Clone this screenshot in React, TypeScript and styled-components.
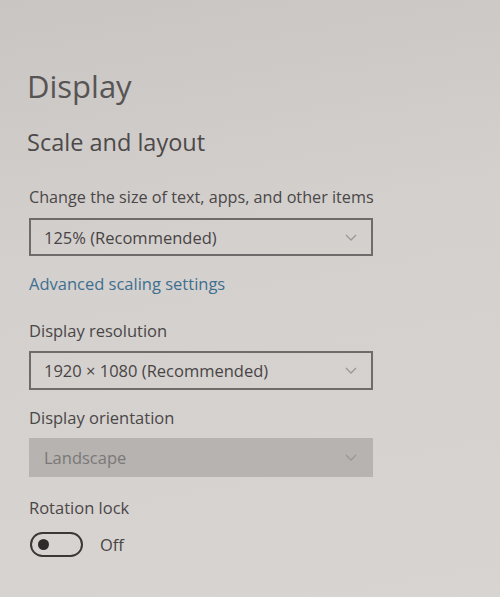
import styled, { createGlobalStyle } from "styled-components";

const GlobalStyle = createGlobalStyle`
  html, body {
    margin: 0;
    padding: 0;
  }
  body {
    background: linear-gradient(170deg, #c9c5c3 0%, #d4d0ce 40%, #d8d4d2 100%);
    font-family: "Open Sans", "Noto Sans", sans-serif;
    width: 500px;
    height: 597px;
    overflow: hidden;
  }
`;

const Page = styled.main`
  display: flex;
  flex-direction: column;
  align-items: flex-start;
  padding: 66px 0 0 27px;
`;

const Title = styled.h1`
  margin: 0;
  font-size: 31px;
  font-weight: 400;
  line-height: 40px;
  color: #575454;
`;

const Subtitle = styled.h2`
  margin: 20px 0 0;
  font-size: 23.5px;
  font-weight: 400;
  line-height: 32px;
  color: #4c4949;
`;

const Label = styled.div<{ $top: number; $tight?: boolean }>`
  margin: ${(p) => p.$top}px 0 0 2px;
  font-size: ${(p) => (p.$tight ? "16.2px" : "16.5px")};
  line-height: 22px;
  color: #4a4747;
  white-space: nowrap;
`;

const Select = styled.div<{ $disabled?: boolean; $top: number; $h: number }>`
  box-sizing: border-box;
  margin: ${(p) => p.$top}px 0 0 2px;
  width: 344px;
  height: ${(p) => p.$h}px;
  display: flex;
  align-items: center;
  justify-content: space-between;
  padding: 0 14px 0 13px;
  border: 2px solid ${(p) => (p.$disabled ? "transparent" : "#6e6b6a")};
  background: ${(p) => (p.$disabled ? "#b6b3b1" : "transparent")};
  color: ${(p) => (p.$disabled ? "#7b7877" : "#474444")};
  font-size: 16.5px;
`;

const Chevron = styled.svg`
  width: 12px;
  height: 7px;
  flex: none;
`;

const Link = styled.a`
  margin: 17px 0 0 2px;
  font-size: 16.5px;
  line-height: 22px;
  color: #3f6f8f;
  text-decoration: none;
`;

const ToggleRow = styled.div`
  display: flex;
  align-items: center;
  gap: 17px;
  margin: 13px 0 0 3px;
`;

const Toggle = styled.div`
  box-sizing: border-box;
  width: 53px;
  height: 25px;
  border: 2px solid #3a3737;
  border-radius: 13px;
  display: flex;
  align-items: center;
  padding-left: 6px;
`;

const Knob = styled.span`
  width: 11px;
  height: 11px;
  border-radius: 50%;
  background: #2e2b2b;
`;

const ToggleText = styled.span`
  font-size: 16.5px;
  color: #474444;
`;

const Arrow = () => (
  <Chevron viewBox="0 0 12 7">
    <polyline points="1,1 6,6 11,1" fill="none" stroke="#9a9797" strokeWidth="1.3" />
  </Chevron>
);

export default function App() {
  return (
    <>
      <GlobalStyle />
      <Page>
        <Title>Display</Title>
        <Subtitle>Scale and layout</Subtitle>
        <Label $top={28} $tight>
          Change the size of text, apps, and other items
        </Label>
        <Select $top={10} $h={38}>
          <span>125% (Recommended)</span>
          <Arrow />
        </Select>
        <Link href="#">Advanced scaling settings</Link>
        <Label $top={25}>Display resolution</Label>
        <Select $top={9} $h={39}>
          <span>1920 × 1080 (Recommended)</span>
          <Arrow />
        </Select>
        <Label $top={17}>Display orientation</Label>
        <Select $top={9} $h={39} $disabled>
          <span>Landscape</span>
          <Arrow />
        </Select>
        <Label $top={20}>Rotation lock</Label>
        <ToggleRow>
          <Toggle>
            <Knob />
          </Toggle>
          <ToggleText>Off</ToggleText>
        </ToggleRow>
      </Page>
    </>
  );
}
